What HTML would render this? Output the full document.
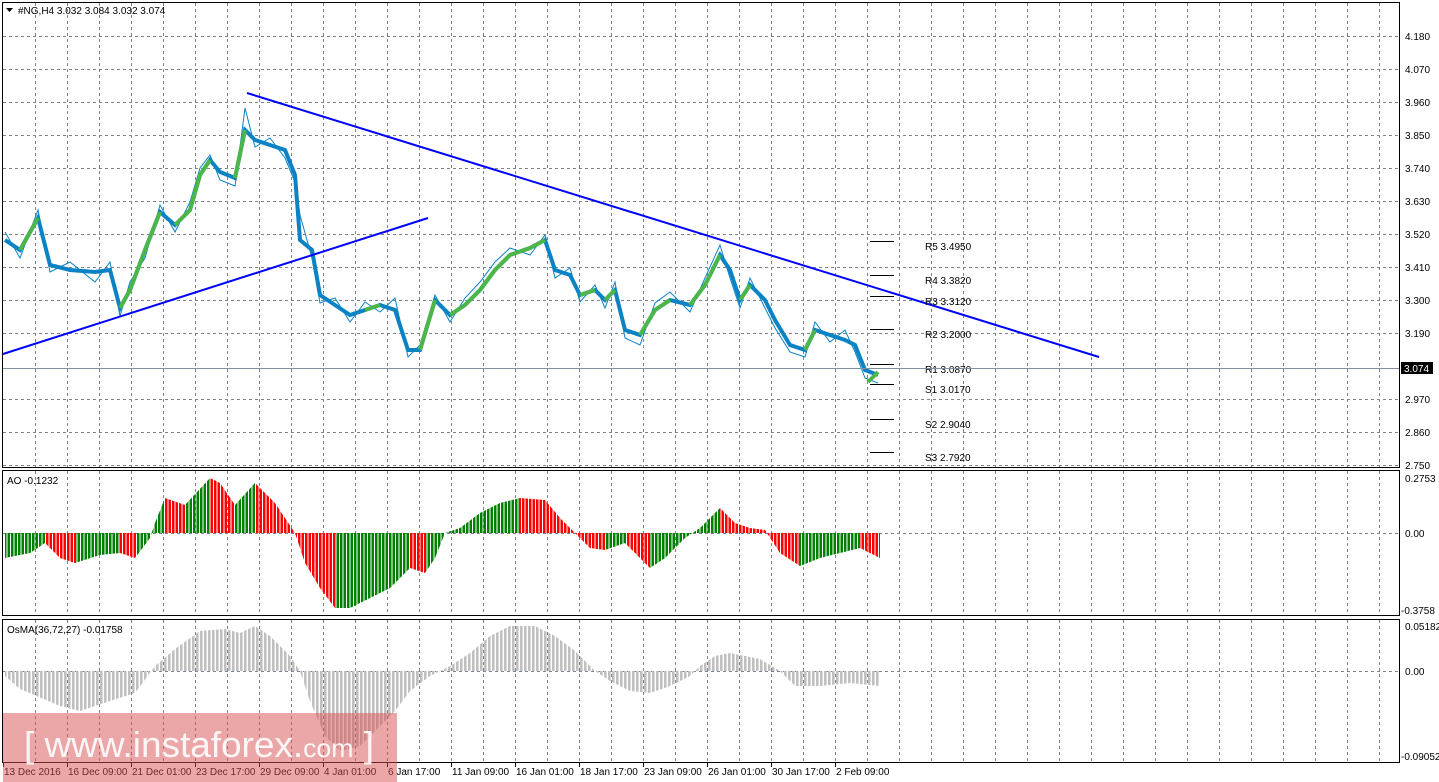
<!DOCTYPE html>
<html><head><meta charset="utf-8"><style>
html,body{margin:0;padding:0;background:#fff;}
body{width:1439px;height:782px;overflow:hidden;position:relative;}
svg{position:absolute;left:0;top:0;}
text{font-family:"Liberation Sans",sans-serif;font-size:10px;fill:#000;}
</style></head><body>
<svg width="1439" height="782" xmlns="http://www.w3.org/2000/svg">
<defs>
<pattern id="pg" x="4" y="0" width="3.5" height="10" patternUnits="userSpaceOnUse"><rect width="2.5" height="10" fill="#008000"/></pattern>
<pattern id="pr" x="4" y="0" width="3.5" height="10" patternUnits="userSpaceOnUse"><rect width="2.5" height="10" fill="#ff0000"/></pattern>
<pattern id="py" x="4" y="0" width="4" height="10" patternUnits="userSpaceOnUse"><rect width="2.6" height="10" fill="#c0c0c0"/></pattern>
<clipPath id="ca"><polygon points="5,533 5,558 30,553 45,543 60,558 75,563 100,555 120,553 135,558 150,538 155,523 165,498 185,505 210,478 220,483 235,505 255,483 275,503 295,533 305,563 320,588 335,608 350,608 370,598 390,588 410,568 425,573 435,558 445,533 460,528 480,513 500,503 520,498 545,500 560,518 575,533 590,548 605,550 625,543 650,568 665,558 685,538 700,528 720,508 735,523 750,528 765,530 780,553 800,566 820,558 840,553 860,548 880,558 880,533"/></clipPath>
</defs>
<g stroke="#7c8490" stroke-dasharray="3,3" fill="none">
<path d="M35.5 3V467M67.5 3V467M99.5 3V467M131.5 3V467M163.5 3V467M195.5 3V467M227.5 3V467M259.5 3V467M291.5 3V467M323.5 3V467M355.5 3V467M387.5 3V467M419.5 3V467M451.5 3V467M483.5 3V467M515.5 3V467M547.5 3V467M579.5 3V467M611.5 3V467M643.5 3V467M675.5 3V467M707.5 3V467M739.5 3V467M771.5 3V467M803.5 3V467M835.5 3V467M867.5 3V467M899.5 3V467M931.5 3V467M963.5 3V467M995.5 3V467M1027.5 3V467M1059.5 3V467M1091.5 3V467M1123.5 3V467M1155.5 3V467M1187.5 3V467M1219.5 3V467M1251.5 3V467M1283.5 3V467M1315.5 3V467M1347.5 3V467M1379.5 3V467"/>
<path d="M35.5 471V615M67.5 471V615M99.5 471V615M131.5 471V615M163.5 471V615M195.5 471V615M227.5 471V615M259.5 471V615M291.5 471V615M323.5 471V615M355.5 471V615M387.5 471V615M419.5 471V615M451.5 471V615M483.5 471V615M515.5 471V615M547.5 471V615M579.5 471V615M611.5 471V615M643.5 471V615M675.5 471V615M707.5 471V615M739.5 471V615M771.5 471V615M803.5 471V615M835.5 471V615M867.5 471V615M899.5 471V615M931.5 471V615M963.5 471V615M995.5 471V615M1027.5 471V615M1059.5 471V615M1091.5 471V615M1123.5 471V615M1155.5 471V615M1187.5 471V615M1219.5 471V615M1251.5 471V615M1283.5 471V615M1315.5 471V615M1347.5 471V615M1379.5 471V615"/>
<path d="M35.5 620V762M67.5 620V762M99.5 620V762M131.5 620V762M163.5 620V762M195.5 620V762M227.5 620V762M259.5 620V762M291.5 620V762M323.5 620V762M355.5 620V762M387.5 620V762M419.5 620V762M451.5 620V762M483.5 620V762M515.5 620V762M547.5 620V762M579.5 620V762M611.5 620V762M643.5 620V762M675.5 620V762M707.5 620V762M739.5 620V762M771.5 620V762M803.5 620V762M835.5 620V762M867.5 620V762M899.5 620V762M931.5 620V762M963.5 620V762M995.5 620V762M1027.5 620V762M1059.5 620V762M1091.5 620V762M1123.5 620V762M1155.5 620V762M1187.5 620V762M1219.5 620V762M1251.5 620V762M1283.5 620V762M1315.5 620V762M1347.5 620V762M1379.5 620V762"/>
<path d="M3 36.5H1399M3 69.5H1399M3 102.5H1399M3 135.5H1399M3 168.5H1399M3 201.5H1399M3 234.5H1399M3 267.5H1399M3 300.5H1399M3 333.5H1399M3 399.5H1399M3 432.5H1399M3 465.5H1399M3 533.5H1399M3 671.5H1399"/>
</g>
<g>
<text x="1405" y="40">4.180</text><text x="1405" y="73">4.070</text><text x="1405" y="106">3.960</text><text x="1405" y="139">3.850</text><text x="1405" y="172">3.740</text><text x="1405" y="205">3.630</text><text x="1405" y="238">3.520</text><text x="1405" y="271">3.410</text><text x="1405" y="304">3.300</text><text x="1405" y="337">3.190</text><text x="1405" y="403">2.970</text><text x="1405" y="436">2.860</text><text x="1405" y="469">2.750</text>
<text x="1405" y="482">0.2753</text><text x="1405" y="537">0.00</text><text x="1401" y="614">-0.3758</text><text x="1405" y="630">0.05182</text><text x="1405" y="675">0.00</text><text x="1401" y="760">-0.09052</text>
</g>
<polyline fill="none" stroke="#0a82c4" stroke-width="1" points="5,232 20,258 38,210 50,272 70,262 95,282 110,262 120,316 130,282 145,258 160,205 175,232 190,202 200,168 210,155 220,180 235,186 245,108 255,147 270,138 285,158 295,182 300,215 312,258 320,303 335,298 350,322 365,302 380,312 395,298 408,357 420,345 435,295 450,322 465,298 480,282 495,262 510,248 530,255 545,235 555,278 570,268 580,302 595,285 605,308 615,282 625,338 640,345 655,303 670,292 690,312 705,278 720,245 730,278 740,308 750,278 765,308 775,328 790,352 805,357 815,322 830,342 845,330 855,352 865,378 878,383"/>
<polyline fill="none" stroke="#0a82c4" stroke-width="4" points="5,240 20,250 38,218 50,265 70,270 95,272 110,270 120,308 130,290 145,250 160,212 175,225 190,210 200,175 210,160 220,172 235,178 245,130 255,140 270,145 285,150 295,175 300,240 312,250 320,295 335,305 350,315 365,310 380,305 395,310 408,350 420,350 435,300 450,315 465,305 480,290 495,270 510,255 530,248 545,240 555,270 570,275 580,295 595,290 605,300 615,290 625,330 640,335 655,310 670,300 690,305 705,285 720,255 730,270 740,300 750,285 765,300 775,320 790,345 805,350 815,330 830,335 845,340 855,345 865,370 878,375"/>
<g fill="none" stroke="#4cb648" stroke-width="4">
<polyline points="20,250 38,218"/><polyline points="120,308 130,290 145,250 160,212"/><polyline points="175,225 190,210 200,175 210,160"/><polyline points="235,178 245,130"/><polyline points="365,310 380,305"/><polyline points="420,350 435,300"/><polyline points="450,315 465,305 480,290 495,270 510,255 530,248 545,240"/><polyline points="580,295 595,290"/><polyline points="605,300 615,290"/><polyline points="640,335 655,310 670,300"/><polyline points="690,305 705,285 720,255"/><polyline points="740,300 750,285"/><polyline points="805,350 815,330"/><polyline points="868,382 878,372"/>
</g>
<path d="M247 93L1099 357M3 354L428 218" stroke="#0000ff" stroke-width="2" fill="none"/>
<path d="M870 241.5H894M870 275.5H894M870 296.5H894M870 329.5H894M870 364.5H894M870 384.5H894M870 419.5H894M870 452.5H894" stroke="#000"/>
<text x="925" y="250">R5 3.4950</text><text x="925" y="284">R4 3.3820</text><text x="925" y="305">R3 3.3120</text><text x="925" y="338">R2 3.2000</text><text x="925" y="373">R1 3.0870</text><text x="925" y="393">S1 3.0170</text><text x="925" y="428">S2 2.9040</text><text x="925" y="461">S3 2.7920</text>
<path d="M3 368.5H1399" stroke="#8090a0"/><rect x="1401" y="362" width="32" height="12" fill="#000"/><text x="1404" y="372" style="fill:#fff">3.074</text>
<g clip-path="url(#ca)">
<rect x="4" y="470" width="26" height="145" fill="url(#pg)"/>
<rect x="30" y="470" width="15" height="145" fill="url(#pg)"/>
<rect x="45" y="470" width="30" height="145" fill="url(#pr)"/>
<rect x="75" y="470" width="45" height="145" fill="url(#pg)"/>
<rect x="120" y="470" width="15" height="145" fill="url(#pr)"/>
<rect x="135" y="470" width="30" height="145" fill="url(#pg)"/>
<rect x="165" y="470" width="20" height="145" fill="url(#pr)"/>
<rect x="185" y="470" width="25" height="145" fill="url(#pg)"/>
<rect x="210" y="470" width="25" height="145" fill="url(#pr)"/>
<rect x="235" y="470" width="20" height="145" fill="url(#pg)"/>
<rect x="255" y="470" width="80" height="145" fill="url(#pr)"/>
<rect x="335" y="470" width="75" height="145" fill="url(#pg)"/>
<rect x="410" y="470" width="15" height="145" fill="url(#pr)"/>
<rect x="425" y="470" width="95" height="145" fill="url(#pg)"/>
<rect x="520" y="470" width="85" height="145" fill="url(#pr)"/>
<rect x="605" y="470" width="20" height="145" fill="url(#pg)"/>
<rect x="625" y="470" width="25" height="145" fill="url(#pr)"/>
<rect x="650" y="470" width="70" height="145" fill="url(#pg)"/>
<rect x="720" y="470" width="80" height="145" fill="url(#pr)"/>
<rect x="800" y="470" width="60" height="145" fill="url(#pg)"/>
<rect x="860" y="470" width="20" height="145" fill="url(#pr)"/>
</g>
<polygon fill="url(#py)" points="5,671 5,676 20,689 60,706 80,711 110,701 135,693 155,666 175,649 200,631 225,629 240,633 255,626 270,636 290,656 300,671 310,701 325,736 340,751 360,746 380,726 395,711 410,691 430,676 450,666 470,653 490,636 510,626 535,626 555,636 575,651 595,671 610,681 630,691 650,693 670,686 690,676 700,666 715,656 730,653 760,659 780,671 795,686 820,686 850,683 880,686 880,671"/>
<path d="M2.5 2.5H1399.5V467.5H2.5zM2.5 470.5H1399.5V615.5H2.5zM2.5 619.5H1399.5V762.5H2.5z" stroke="#000" fill="none"/>
<path d="M6 8h7l-3.5 4z" fill="#000"/><text x="18" y="14">#NG,H4  3.032 3.084 3.032 3.074</text>
<text x="7" y="484">AO -0.1232</text><text x="7" y="633">OsMA(36,72,27) -0.01758</text>
<path d="M3.5 763v4M67.5 763v4M131.5 763v4M195.5 763v4M259.5 763v4M323.5 763v4M387.5 763v4M451.5 763v4M515.5 763v4M579.5 763v4M643.5 763v4M707.5 763v4M771.5 763v4M835.5 763v4" stroke="#000"/>
<text x="4" y="775">13 Dec 2016</text><text x="68" y="775">16 Dec 09:00</text><text x="132" y="775">21 Dec 01:00</text><text x="196" y="775">23 Dec 17:00</text><text x="260" y="775">29 Dec 09:00</text><text x="324" y="775">4 Jan 01:00</text><text x="388" y="775">6 Jan 17:00</text><text x="452" y="775">11 Jan 09:00</text><text x="516" y="775">16 Jan 01:00</text><text x="580" y="775">18 Jan 17:00</text><text x="644" y="775">23 Jan 09:00</text><text x="708" y="775">26 Jan 01:00</text><text x="772" y="775">30 Jan 17:00</text><text x="836" y="775">2 Feb 09:00</text>
<rect x="3" y="713" width="394" height="69" fill="#d85050" fill-opacity="0.5"/>
<text x="24" y="757" textLength="350" lengthAdjust="spacingAndGlyphs" style="font-size:36px;fill:#fff;fill-opacity:0.9">[ www.instaforex.<tspan style="font-size:26px">com</tspan> ]</text>
</svg>
</body></html>
